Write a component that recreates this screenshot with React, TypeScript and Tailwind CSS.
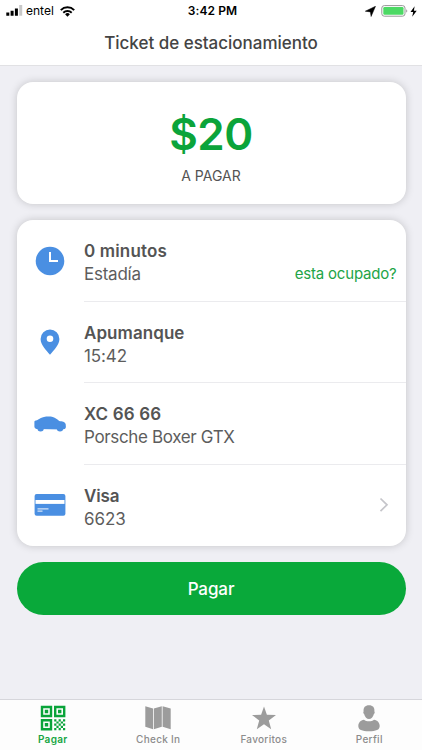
import type { ReactNode } from "react";
import { clsx } from "clsx";

function ClockIcon() {
  return (
    <svg width="30" height="30" viewBox="0 0 30 30" fill="none">
      <circle cx="15" cy="15" r="14.3" fill="#4a8fe2" />
      <path d="M15 6v9h8" stroke="#fff" strokeWidth="2" />
    </svg>
  );
}

function PinIcon() {
  return (
    <svg width="20" height="26" viewBox="0 0 20 26">
      <path
        fill="#4a8fe2"
        fillRule="evenodd"
        d="M10 .5A9.4 9.4 0 0 0 .6 9.9C.6 16 6 20.500 10 25.800C14 20.500 19.400 16 19.400 9.900A9.400 9.400 0 0 0 10 .5ZM10 6.500a3.300 3.300 0 1 1 0 6.600a3.300 3.300 0 0 1 0-6.600Z"
      />
    </svg>
  );
}

function CarIcon() {
  return (
    <svg width="32" height="16" viewBox="0 0 32 16" fill="#4a8fe2">
      <path d="M.4 5.800C.3 4.900 1.400 4.500 3 4.200C5.300 2.600 7.500 1.200 10 .9C13 .5 16.500.5 18.800 1C21.300 1.700 23.500 3.400 25.200 4.900C28 5.200 31.300 5.800 31.700 8.300L31.900 11C31.800 12.900 30 13.400 28 13.400L4 13C1.800 12.900.6 12.400.4 10.700Z" />
      <circle cx="6.600" cy="12.200" r="3.200" />
      <circle cx="26" cy="12.200" r="3.200" />
    </svg>
  );
}

function CardIcon() {
  return (
    <svg width="32" height="22" viewBox="0 0 32 22">
      <rect x=".6" y=".1" width="30.800" height="21.700" rx="2" fill="#4a8fe2" />
      <path fill="#fff" d="M1.500 6h29v3.900h-29z" />
      <path fill="#d3e4f8" d="M3.500 14.200h11v1.200h-11zM3.500 16.500h5v1.200h-5z" />
    </svg>
  );
}

function QrIcon() {
  return (
    <svg width="26" height="26" viewBox="0 0 26 26">
      <g fill="none" stroke="#09a43a" strokeWidth="2.400">
        <path d="M2 2h9v9H2zM15.200 2h9v9h-9zM2 15.200h9v9H2z" />
      </g>
      <path fill="#09a43a" d="M4.800 4.800h3.400v3.400H4.800zM18 4.800h3.400v3.400H18zM4.800 18h3.400v3.400H4.800z" />
      <path
        fill="#09a43a"
        d="M14.200 14.200h2.200v2.200h-2.200zM18.600 14.200h2.200v2.200h-2.200zM23 14.200h2.200v2.200H23zM16.400 16.400h2.200v2.200h-2.200zM20.800 16.400H23v2.200h-2.200zM14.200 18.600h2.200v2.200h-2.200zM18.600 18.600h2.200v2.200h-2.200zM23 18.600h2.200v2.200H23zM16.400 20.800h2.200V23h-2.200zM20.800 20.800H23V23h-2.200zM14.200 23h2.200v2.200h-2.200zM18.600 23h2.200v2.200h-2.200zM23 23h2.200v2.200H23z"
      />
    </svg>
  );
}

function MapIcon() {
  return (
    <svg width="26" height="26" viewBox="0 0 26 26" fill="#9c9c9c">
      <path d="M.3 1.200 8 3.500v20.800L.3 21.700zM8.800 3.500l8-2.300v20.500l-8 2.600zM17.600 1.200 25.700 3.500v20.800l-8.100-2.600z" />
    </svg>
  );
}

function StarIcon() {
  return (
    <svg width="26" height="26" viewBox="0 0 26 26" fill="#9c9c9c">
      <path d="M13 1.500 15.900 9.800 25 10 17.800 15.500 20.200 24.300 13 19.300 5.800 24.300 8.200 15.500 1 10 10.100 9.800Z" />
    </svg>
  );
}

function PersonIcon() {
  return (
    <svg width="26" height="27" viewBox="0 0 26 27" fill="#9c9c9c">
      <path d="M13 .2C16.800.2 18.800 2.400 18.400 6.500C19 7 18.700 8.500 17.900 9C17.100 12.100 15.200 14 13 14S8.900 12.100 8.100 9C7.300 8.500 7 7 7.600 6.500C7.200 2.400 9.200.2 13 .2Z" />
      <path d="M8 14.700C10.400 16.700 15.600 16.700 18 14.700C21.400 15.300 23.700 17.500 23.700 21C23.700 25 20 26.200 13 26.200S2.300 25 2.300 21C2.300 17.500 4.600 15.300 8 14.700Z" />
    </svg>
  );
}

type Row = {
  title: string;
  detail: string;
  icon: ReactNode;
  titleClass: string;
  detailClass: string;
  action?: ReactNode;
};

const rows: Row[] = [
  {
    title: "0 minutos",
    detail: "Estadía",
    icon: <ClockIcon />,
    titleClass: "tracking-[0.15px]",
    detailClass: "tracking-[-0.25px]",
    action: (
      <button className="pr-[9px] pt-[28px] text-[15px] leading-5 tracking-[-0.2px] text-[#22a447]">
        esta ocupado?
      </button>
    ),
  },
  {
    title: "Apumanque",
    detail: "15:42",
    icon: <PinIcon />,
    titleClass: "tracking-[0.06px]",
    detailClass: "tracking-[-0.1px]",
  },
  {
    title: "XC 66 66",
    detail: "Porsche Boxer GTX",
    icon: <CarIcon />,
    titleClass: "tracking-[0.15px]",
    detailClass: "tracking-[-0.35px]",
  },
  {
    title: "Visa",
    detail: "6623",
    icon: <CardIcon />,
    titleClass: "tracking-[-0.15px]",
    detailClass: "tracking-[-0.1px]",
    action: (
      <svg className="mr-[17px]" width="10" height="16" viewBox="0 0 10 16" fill="none">
        <path d="m1.500 1.500 6.500 6.300-6.500 6.300" stroke="#c5c5ca" strokeWidth="1.700" />
      </svg>
    ),
  },
];

const tabs = [
  { label: "Pagar", icon: <QrIcon />, active: true },
  { label: "Check In", icon: <MapIcon /> },
  { label: "Favoritos", icon: <StarIcon /> },
  { label: "Perfil", icon: <PersonIcon /> },
];

function StatusBar() {
  return (
    <div className="grid h-[22px] grid-cols-3 items-center text-black">
      <div className="flex items-center pl-[6px]">
        <svg width="18" height="12" viewBox="0 0 18 12">
          <path d="M.3 7.500h3v3.200h-3zM4.600 5.800h3v4.900h-3zM8.900 3.600h3v7.100h-3z" />
          <path fill="#c8c8c8" d="M13.200 0h3v10.700h-3z" />
        </svg>
        <span className="ml-[2px] text-xs leading-4">entel</span>
        <svg className="ml-[6px]" width="15" height="11" viewBox="0 0 15 11" fill="none" stroke="#000">
          <path d="M.8 4.100a9.500 9.500 0 0 1 13.400 0" strokeWidth="2" />
          <path d="M3.300 6.700a6 6 0 0 1 8.400 0" strokeWidth="1.900" />
          <path d="M7.500 10.700 5.100 8.300a3.400 3.400 0 0 1 4.800 0Z" fill="#000" stroke="none" />
        </svg>
      </div>
      <span className="pl-[3px] text-center text-xs leading-4 font-semibold tracking-[0.1px]">3:42 PM</span>
      <div className="flex items-center justify-end pr-[5px]">
        <svg width="11" height="11" viewBox="0 0 11 11">
          <path d="M10.500.3 6.100 10.500 5.400 5.900.3 5.200Z" stroke="#000" strokeWidth=".5" />
        </svg>
        <svg className="ml-[5px]" width="28" height="12" viewBox="0 0 28 12" fill="none">
          <rect x=".8" y=".6" width="23.200" height="10.600" rx="2.500" stroke="#979797" />
          <rect x="2.300" y="2.100" width="20.200" height="7.600" rx="1.200" fill="#4cd964" />
          <path d="M25.300 4.200c1.300.5 1.300 2.900 0 3.400Z" fill="#8a8a8a" />
        </svg>
        <svg className="ml-[1px]" width="7" height="11" viewBox="0 0 7 11">
          <path d="M4.600.2.500 6h2.700L2.200 10.700 6.700 4.700H3.900Z" />
        </svg>
      </div>
    </div>
  );
}

export default function App() {
  return (
    <div className="flex h-screen flex-col overflow-hidden bg-[#efeff4] font-['Inter',sans-serif] text-[#545454]">
      <header className="h-[66px] shrink-0 border-b border-[#e1e1e4] bg-white">
        <StatusBar />
        <h1 className="text-center text-[17px] leading-[43px] font-medium tracking-[-0.02px] text-[#444444]">
          Ticket de estacionamiento
        </h1>
      </header>

      <main className="flex-1 px-[16.5px] pt-4">
        <section className="h-[122px] rounded-2xl bg-white pt-[24px] text-center shadow-[0_0_8px_rgba(0,0,0,0.18)]">
          <p className="text-[44px] leading-[56px] font-semibold tracking-[-0.5px] text-[#0ba43a]">$20</p>
          <p className="mt-[4px] text-sm leading-5">A PAGAR</p>
        </section>

        <section className="mt-4 flex h-[326px] flex-col overflow-hidden rounded-2xl bg-white shadow-[0_0_8px_rgba(0,0,0,0.18)]">
          {rows.map((row, i) => (
            <div key={row.title} className="flex flex-1">
              <div className="flex w-[67.5px] items-center justify-center">{row.icon}</div>
              <div
                className={clsx(
                  "flex flex-1 items-center justify-between",
                  i < rows.length - 1 && "border-b border-[#ebebee]"
                )}
              >
                <div className="pt-[6px]">
                  <p className={clsx("text-[17px] leading-[23px] font-semibold", row.titleClass)}>{row.title}</p>
                  <p className={clsx("text-[17px] leading-[23px] text-[#5d5d5d]", row.detailClass)}>{row.detail}</p>
                </div>
                {row.action}
              </div>
            </div>
          ))}
        </section>

        <button className="mt-4 h-[53px] w-full rounded-full bg-[#09a93a] pt-[2px] text-[17px] font-medium tracking-[-0.1px] text-white">
          Pagar
        </button>
      </main>

      <nav className="grid h-[51px] shrink-0 grid-cols-4 border-t border-[#d6d6db] bg-[#fdfdfd]">
        {tabs.map((tab) => (
          <div
            key={tab.label}
            className={clsx(
              "flex flex-col items-center pt-[5px] text-[10px] tracking-[0.3px]",
              tab.active ? "font-semibold text-[#16a542]" : "font-medium text-[#8c8c8c]"
            )}
          >
            <div className="h-[27px]">{tab.icon}</div>
            <span className="leading-[15px]">{tab.label}</span>
          </div>
        ))}
      </nav>
    </div>
  );
}
